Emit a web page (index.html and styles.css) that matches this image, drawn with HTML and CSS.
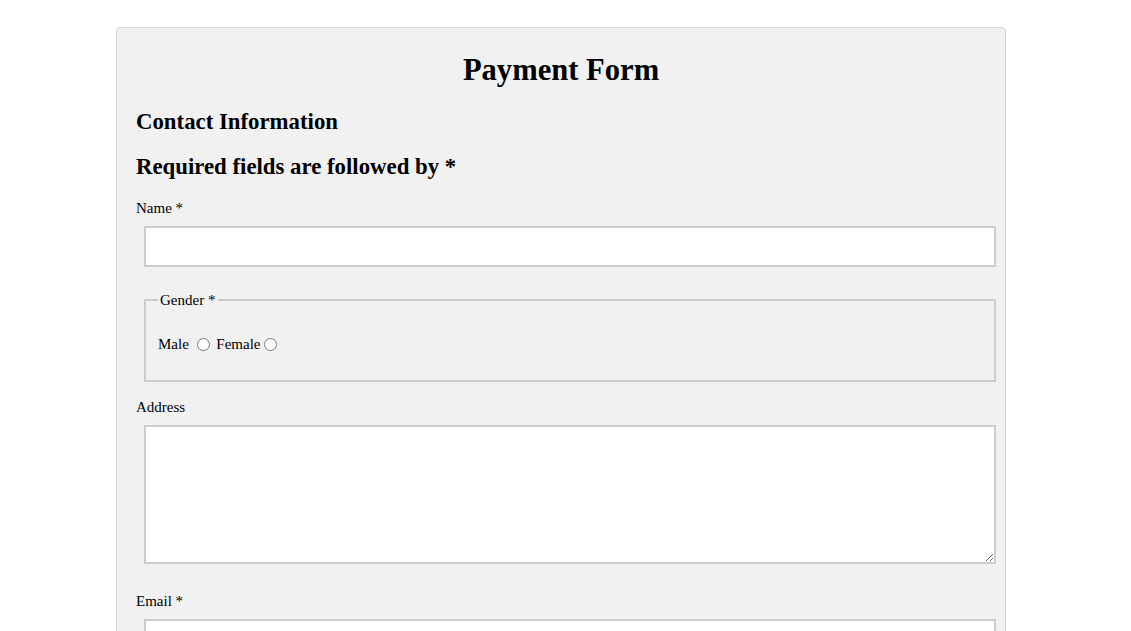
FILE: index.html
```html
<!DOCTYPE html>
<html>
<head>
<meta charset="utf-8">
<title>Payment Form</title>
<link rel="stylesheet" href="styles.css">
</head>
<body>
<form class="card">
  <h1 class="title">Payment Form</h1>
  <h2 class="section">Contact Information</h2>
  <h2 class="section req">Required fields are followed by *</h2>
  <label class="lbl" for="name">Name *</label>
  <input class="field" id="name" type="text">
  <fieldset class="gender">
    <legend class="legend">Gender *</legend>
    <div class="radios">
      <label>Male <input type="radio" name="g"></label>
      <label>Female<input type="radio" name="g"></label>
    </div>
  </fieldset>
  <label class="lbl addr-lbl" for="addr">Address</label>
  <textarea class="field area" id="addr"></textarea>
  <label class="lbl email-lbl" for="email">Email *</label>
  <input class="field" id="email" type="email">
</form>
</body>
</html>
```
FILE: styles.css
```css
html, body { margin: 0; padding: 0; background: #fff; }
body {
  font-family: "Liberation Serif", "Times New Roman", serif;
  color: #000;
  height: 631px;
  overflow: hidden;
}
.card {
  margin: 27px 0 0 116px;
  width: 850px;
  padding: 0 19px 40px 19px;
  background: #f1f1f1;
  border: 1px solid #d6d6d6;
  border-radius: 4px;
  display: flex;
  flex-direction: column;
  align-items: flex-start;
}
.title {
  align-self: stretch;
  text-align: center;
  font-size: 30.6px;
  line-height: 34px;
  margin: 25px 0 0 0;
}
.section {
  font-size: 22.8px;
  line-height: 26px;
  margin: 22px 0 0 0;
}
.req { margin-top: 19px; }
.lbl {
  font-size: 15px;
  line-height: 17px;
  margin-top: 20px;
}
.field {
  box-sizing: border-box;
  width: 852px;
  margin: 9px 0 0 8px;
  height: 41px;
  border: 2px solid #cccccc;
  background: #fff;
  font-family: inherit;
}
.gender {
  box-sizing: border-box;
  width: 852px;
  margin: 23px 0 0 8px;
  padding: 0 12px 0 12px;
  border: 2px solid #cccccc;
  height: 92px;
  font-size: 15px;
}
.legend {
  padding: 2px 3px 0 2px;
  margin-left: 0;
  line-height: 17px;
}
.radios {
  margin-top: 27px;
  line-height: 17px;
}
.radios input {
  margin: 0 3px 0 4px;
  vertical-align: -2px;
}
.addr-lbl { margin-top: 17px; }
.area {
  height: 139px;
  resize: vertical;
}
.email-lbl { margin-top: 29px; }
```
